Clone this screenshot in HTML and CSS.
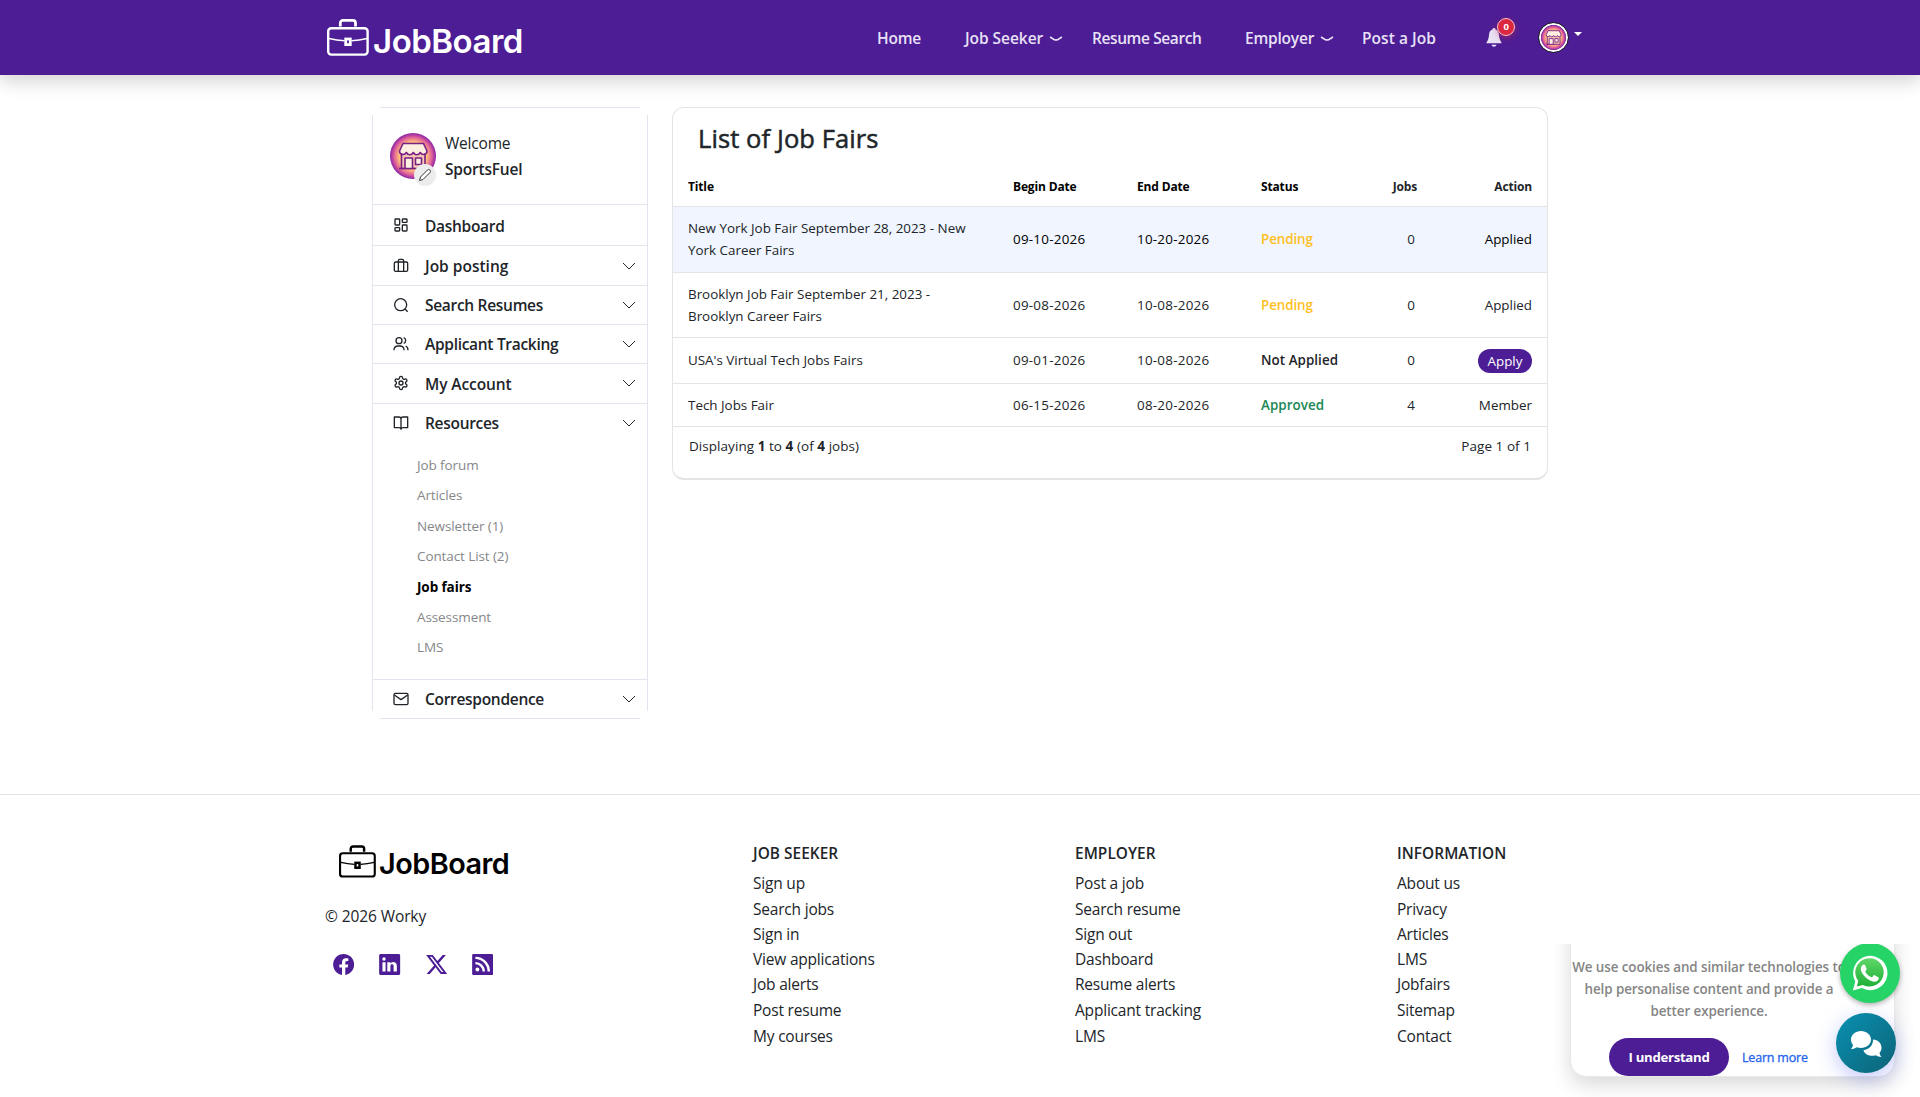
FILE: index.html
```html
<!DOCTYPE html>
<html lang="en">
<head>
  <meta charset="UTF-8">
  <meta name="viewport" content="width=device-width, initial-scale=1.0">
  <title>List of Job Fairs | JobBoard</title>
  <link rel="stylesheet" href="styles.css">
</head>
<body>

  <!-- Shared icons -->
  <svg class="sprite" width="0" height="0">
    <defs>
      <radialGradient id="shop-bg">
        <stop offset="0.6" stop-color="#ffc07a"/>
        <stop offset="0.82" stop-color="#e0609a"/>
        <stop offset="1" stop-color="#8a22a5"/>
      </radialGradient>
      <linearGradient id="wa-bg" x1="0" y1="0" x2="0" y2="1">
        <stop offset="0" stop-color="#5fd669"/>
        <stop offset="1" stop-color="#20b038"/>
      </linearGradient>
      <symbol id="briefcase" viewBox="0 0 42 37">
        <g fill="none" stroke="currentColor" stroke-width="2.4">
          <rect x="1.2" y="9.2" width="39.4" height="26.4" rx="3"/>
          <path d="M13.3 7.5V4a2.6 2.6 0 0 1 2.6-2.6h10A2.6 2.6 0 0 1 28.5 4v3.500" stroke-width="2.800"/>
          <path d="M2 19.500c5 1.200 10 2 15.500 2.300M40 19.500c-5 1.200-10 2-15.500 2.300" stroke-width="1.600"/>
          <rect x="18.700" y="20" width="4.600" height="5.600" stroke-width="2.800"/>
        </g>
      </symbol>
      <symbol id="shop" viewBox="0 0 46 46">
        <circle cx="23" cy="23" r="23" fill="url(#shop-bg)"/>
        <g fill="#fdf0e0" stroke="#7a1f86" stroke-width="1.600" stroke-linejoin="round">
          <path d="M11.500 20v15.500h23.500V20z" fill="#f5c9b0"/>
          <path d="M13 10.500h20.500l3.500 7.500c0 4-5 4.500-6.800 1.500-1.700 3-5.200 3-6.900 0-1.700 3-5.200 3-6.900 0C14.600 22.500 9.500 22 9.500 18z"/>
          <path d="M15 35.500V25h7.500v10.500M25.500 25h6v6.500h-6zM9 35.500h16"/>
        </g>
      </symbol>
      <symbol id="chevron" viewBox="0 0 16 16">
        <path d="M2 5l6 6 6-6" fill="none" stroke="currentColor" stroke-width="1"/>
      </symbol>
    </defs>
  </svg>

  <!-- Navbar -->
  <header class="navbar">
    <div class="navbar-inner">
      <a class="logo" href="#"><svg class="logo-icon"><use href="#briefcase"/></svg><span>JobBoard</span></a>
      <nav class="nav-links">
        <a class="nav-home" href="#">Home</a>
        <a class="nav-seeker" href="#">Job Seeker <svg class="caret" viewBox="0 0 14 6"><path d="M1 1l4 2.500q2 1 4 0L13 1"/></svg></a>
        <a class="nav-resume" href="#">Resume Search</a>
        <a class="nav-employer" href="#">Employer <svg class="caret" viewBox="0 0 14 6"><path d="M1 1l4 2.500q2 1 4 0L13 1"/></svg></a>
        <a class="nav-post" href="#">Post a Job</a>
      </nav>
      <a class="bell" href="#">
        <svg width="16" height="19" viewBox="0 0 16 19"><path d="M8 0c1 0 1.500.7 1.500 1.600C12 2.300 12.800 4.500 13 7c.2 3.500 1.200 5.500 2.500 7.500v.8H.5v-.8C1.800 12.500 2.800 10.500 3 7c.2-2.500 1-4.700 3.500-5.400C6.500.7 7 0 8 0zM5.500 16.800h5c-.3 1.300-1.200 2-2.500 2s-2.200-.7-2.500-2z" fill="#e9e1f5"/></svg>
        <span class="badge">0</span>
      </a>
      <a class="user-menu" href="#"><svg class="user-avatar"><use href="#shop"/></svg><span class="triangle"></span></a>
    </div>
  </header>

  <!-- Main content -->
  <main class="content">
    <aside class="sidebar">
      <div class="profile">
        <div class="profile-picture">
          <svg width="46" height="48"><use href="#shop"/></svg>
          <span class="edit"><svg width="14" height="14" viewBox="0 0 14 14"><path d="M1.500 12.500l1-3.500 7-7c1.500-1.500 4 .8 2.600 2.400L5 11.500z" fill="#fff" stroke="#333" stroke-width="1"/></svg></span>
        </div>
        <div class="profile-name">Welcome<strong>SportsFuel</strong></div>
      </div>
      <a class="menu-item menu-dashboard" href="#">
        <svg class="menu-icon" viewBox="0 0 24 24"><rect x="3" y="3" width="7" height="9" rx="1"/><rect x="14" y="3" width="7" height="5" rx="1"/><rect x="14" y="12" width="7" height="9" rx="1"/><rect x="3" y="16" width="7" height="5" rx="1"/></svg>
        <span>Dashboard</span>
      </a>
      <a class="menu-item menu-posting" href="#">
        <svg class="menu-icon" viewBox="0 0 24 24"><rect x="2" y="6" width="20" height="14" rx="2"/><path d="M16 20V4a2 2 0 0 0-2-2h-4a2 2 0 0 0-2 2v16"/></svg>
        <span>Job posting</span><svg class="arrow"><use href="#chevron"/></svg>
      </a>
      <a class="menu-item" href="#">
        <svg class="menu-icon" viewBox="0 0 24 24"><circle cx="11.500" cy="11.500" r="9"/><path d="M22 22l-4-4"/></svg>
        <span>Search Resumes</span><svg class="arrow"><use href="#chevron"/></svg>
      </a>
      <a class="menu-item" href="#">
        <svg class="menu-icon" viewBox="0 0 24 24"><path d="M1.500 21.500v-1.500a6 6 0 0 1 6-5h3a6 6 0 0 1 6 5v1.500M22.500 21.500c0-3.500-1-5.500-3.500-6.500M16 2.500c4 1 4 7.500 0 8.500"/><circle cx="9" cy="7" r="4.500"/></svg>
        <span>Applicant Tracking</span><svg class="arrow"><use href="#chevron"/></svg>
      </a>
      <a class="menu-item menu-account" href="#">
        <svg class="menu-icon" viewBox="0 0 24 24"><path d="M12.200 2h-.4a2 2 0 0 0-2 2v.2a2 2 0 0 1-1 1.700l-.4.300a2 2 0 0 1-2 0l-.2-.1a2 2 0 0 0-2.700.7l-.2.400a2 2 0 0 0 .7 2.700l.2.100a2 2 0 0 1 1 1.700v.5a2 2 0 0 1-1 1.800l-.2.100a2 2 0 0 0-.7 2.700l.2.400a2 2 0 0 0 2.700.7l.2-.1a2 2 0 0 1 2 0l.4.300a2 2 0 0 1 1 1.700v.2a2 2 0 0 0 2 2h.4a2 2 0 0 0 2-2v-.2a2 2 0 0 1 1-1.700l.4-.3a2 2 0 0 1 2 0l.2.100a2 2 0 0 0 2.700-.7l.2-.4a2 2 0 0 0-.7-2.700l-.2-.1a2 2 0 0 1-1-1.800v-.5a2 2 0 0 1 1-1.700l.2-.1a2 2 0 0 0 .7-2.700l-.2-.4a2 2 0 0 0-2.700-.7l-.2.100a2 2 0 0 1-2 0l-.4-.3a2 2 0 0 1-1-1.700V4a2 2 0 0 0-2-2z"/><circle cx="12" cy="12" r="3"/></svg>
        <span>My Account</span><svg class="arrow"><use href="#chevron"/></svg>
      </a>
      <a class="menu-item" href="#">
        <svg class="menu-icon" viewBox="0 0 24 24"><path d="M12 6v16M2 3h7a3 3 0 0 1 3 3 3 3 0 0 1 3-3h7v16h-7a3 3 0 0 0-3 2 3 3 0 0 0-3-2H2z"/></svg>
        <span>Resources</span><svg class="arrow"><use href="#chevron"/></svg>
      </a>
      <ul class="submenu">
        <li>Job forum</li>
        <li>Articles</li>
        <li>Newsletter (1)</li>
        <li>Contact List (2)</li>
        <li class="active">Job fairs</li>
        <li>Assessment</li>
        <li>LMS</li>
      </ul>
      <a class="menu-item" href="#">
        <svg class="menu-icon" viewBox="0 0 24 24"><rect x="1.500" y="3.500" width="21" height="17" rx="2"/><path d="M2 6l10 7 10-7"/></svg>
        <span>Correspondence</span><svg class="arrow"><use href="#chevron"/></svg>
      </a>
    </aside>

    <section class="card">
      <h1>List of Job Fairs</h1>
      <table>
        <colgroup><col class="col-title"><col class="col-begin"><col class="col-end"><col class="col-status"><col class="col-jobs"><col></colgroup>
        <tr class="head"><th>Title</th><th>Begin Date</th><th>End Date</th><th>Status</th><th class="right th-jobs">Jobs</th><th class="right">Action</th></tr>
        <tr class="tall highlight"><td>New York Job Fair September 28, 2023 - New<br>York Career Fairs</td><td class="date">09-10-2026</td><td class="date">10-20-2026</td><td class="pending">Pending</td><td class="jobs">0</td><td class="right">Applied</td></tr>
        <tr class="tall second"><td>Brooklyn Job Fair September 21, 2023 -<br>Brooklyn Career Fairs</td><td class="date">09-08-2026</td><td class="date">10-08-2026</td><td class="pending">Pending</td><td class="jobs">0</td><td class="right">Applied</td></tr>
        <tr class="third"><td>USA's Virtual Tech Jobs Fairs</td><td class="date">09-01-2026</td><td class="date">10-08-2026</td><td class="not-applied">Not Applied</td><td class="jobs">0</td><td class="right"><a class="apply" href="#">Apply</a></td></tr>
        <tr class="fourth"><td>Tech Jobs Fair</td><td class="date">06-15-2026</td><td class="date">08-20-2026</td><td class="approved">Approved</td><td class="jobs">4</td><td class="right">Member</td></tr>
      </table>
      <div class="pager"><span>Displaying <b>1</b> to <b>4</b> (of <b>4</b> jobs)</span><span>Page 1 of 1</span></div>
    </section>
  </main>

  <!-- Footer -->
  <footer>
    <div class="footer-inner">
      <div class="brand">
        <a class="logo logo-dark" href="#"><svg class="logo-icon"><use href="#briefcase"/></svg><span>JobBoard</span></a>
        <p>© 2026 Worky</p>
        <div class="social">
          <svg viewBox="0 0 16 16"><path d="M16 8.050C16 3.600 12.420 0 8 0S0 3.600 0 8.050c0 4.020 2.930 7.350 6.750 7.950v-5.630H4.720V8.050h2.030V6.280c0-2.020 1.200-3.130 3.020-3.130.88 0 1.790.16 1.790.16v1.980h-1c-1 0-1.310.62-1.310 1.260v1.500h2.220l-.35 2.320H9.250V16C13.070 15.400 16 12.070 16 8.050z"/></svg>
          <svg viewBox="0 0 16 16"><path fill-rule="evenodd" d="M0 1.150C0 .5.500 0 1.200 0h13.600c.7 0 1.200.5 1.200 1.150v13.700c0 .65-.5 1.150-1.200 1.150H1.200C.5 16 0 15.500 0 14.850zM2.500 6.200v7.200h2.400V6.200zM3.700 2.500a1.300 1.300 0 1 0 0 2.600 1.300 1.300 0 0 0 0-2.600zM6.200 6.200v7.200h2.400v-4c0-1 .4-1.500 1.200-1.500.9 0 1.200.6 1.200 1.600v3.900h2.500V9.200c0-2.200-1.200-3.200-2.800-3.200-1.100 0-1.700.6-2.100 1.200v-1z"/></svg>
          <svg viewBox="0 0 16 16"><path fill-rule="evenodd" d="M12.600.75h2.450L9.700 6.880 16 15.250h-4.940l-3.860-5.070-4.430 5.070H.32l5.730-6.570L0 .75h5.060l3.500 4.640zm-.86 13.030h1.360L4.320 2.150H2.860z"/></svg>
          <svg viewBox="0 0 16 16"><path fill-rule="evenodd" d="M1 0h14a1 1 0 0 1 1 1v14a1 1 0 0 1-1 1H1a1 1 0 0 1-1-1V1a1 1 0 0 1 1-1zm1.500 2v1.900A9.400 9.400 0 0 1 11.700 13.300h1.900A11.200 11.200 0 0 0 2.500 2zm0 4v1.900A5.400 5.400 0 0 1 7.900 13.300h1.900A7.300 7.300 0 0 0 2.500 6zM4 10.300a1.500 1.500 0 1 0 0 3 1.500 1.500 0 0 0 0-3z"/></svg>
        </div>
      </div>
      <div class="links">
        <h2>JOB SEEKER</h2>
        <ul><li>Sign up</li><li>Search jobs</li><li class="clipped">Sign in</li><li>View applications</li><li>Job alerts</li><li>Post resume</li><li>My courses</li></ul>
      </div>
      <div class="links">
        <h2>EMPLOYER</h2>
        <ul><li>Post a job</li><li>Search resume</li><li class="clipped">Sign out</li><li>Dashboard</li><li>Resume alerts</li><li>Applicant tracking</li><li>LMS</li></ul>
      </div>
      <div class="links">
        <h2>INFORMATION</h2>
        <ul><li>About us</li><li>Privacy</li><li class="clipped">Articles</li><li>LMS</li><li>Jobfairs</li><li>Sitemap</li><li>Contact</li></ul>
      </div>
    </div>
  </footer>

  <!-- Floating widgets -->
  <div class="widgets">
    <div class="cookie">
      <p>We use cookies and similar technologies to<br>help personalise content and provide a<br>better experience.</p>
      <div class="cookie-actions"><button>I understand</button><a href="#">Learn more</a></div>
    </div>
    <a class="whatsapp" href="#">
      <svg width="36" height="36" viewBox="0 0 36 36"><path d="M.8 35.500l2.500-9A17.200 17.200 0 1 1 9.800 33z" fill="#fff"/><path d="M4.800 31.500l1.500-5.400A14.200 14.200 0 1 1 11 30z" fill="url(#wa-bg)"/><path d="M12.600 9.800c-.8-.4-1.700-.2-2.300.5-3 3.300-1 7.600 2.700 11.500 4.300 4.500 9.500 6.400 12.700 3.600 1-1 1.300-2.600 1-3l-4-2.200c-.8-.3-1 .1-2.200 1.800-.4.500-.9.300-1.900-.2-2.200-1-4-2.800-5.200-4.900-.3-.6.2-.8 1.200-2.300.3-.5 0-1-1-3.200-.4-1-.6-1.400-1-1.600z" fill="#fff"/></svg>
    </a>
    <a class="chat" href="#">
      <svg width="31" height="26" viewBox="0 0 31 26"><path d="M10 0c5.600 0 10 3.700 10 8.500S15.600 17 10 17c-1.600 0-3-.3-4.300-.8C4.400 17.200 2.300 18 0 18c1-1.200 1.800-2.500 2-4C.8 12.500 0 10.500 0 8.500 0 3.700 4.400 0 10 0z" fill="#fff"/><path d="M22 8.500c5 .3 8.500 3.700 8.500 8.200 0 2-.7 3.800-2 5.200.3 1.500 1 2.900 2 4-2.200 0-4.200-.8-5.600-1.700-1.300.4-2.600.6-3.900.6-4.300 0-7.500-2.200-8.600-5.500 5.700-.8 9.900-5.200 9.600-10.800z" fill="#fff"/></svg>
    </a>
  </div>

</body>
</html>
```
FILE: styles.css
```css
/* General Styles */
* {
  box-sizing: border-box;
}

body {
  font-family: 'Open Sans', 'Noto Sans', sans-serif;
  margin: 0;
  height: 1097px;
  overflow: hidden;
  position: relative;
  color: #212529;
  font-size: 15.5px;
  letter-spacing: -0.2px;
  background: #fff;
}

a {
  color: inherit;
  text-decoration: none;
}

ul {
  list-style: none;
  margin: 0;
  padding: 0;
}

.sprite {
  position: absolute;
}

/* Navbar Styles */
.navbar {
  height: 75px;
  background: #4c1d95;
  box-shadow: 0 8px 16px rgba(0, 0, 0, 0.15);
}

.navbar-inner {
  width: 1270px;
  height: 75px;
  margin: 0 auto;
  display: flex;
  align-items: center;
}

.logo {
  display: flex;
  align-items: flex-start;
  width: 205px;
  height: 37px;
  margin-left: 2px;
  color: #fff;
  font-family: 'Inter', sans-serif;
  font-weight: 600;
  font-size: 33px;
  line-height: 44px;
  letter-spacing: -0.5px;
}

.logo-icon {
  width: 42px;
  height: 37px;
  margin-right: 4px;
  flex-shrink: 0;
}

.nav-links {
  display: flex;
  margin-left: 345px;
  color: #e9e1f5;
  font-weight: 600;
  white-space: nowrap;
}

.nav-home { width: 88px; }
.nav-seeker { width: 127px; letter-spacing: -0.05px; }
.nav-resume { width: 153px; letter-spacing: -0.4px; }
.nav-employer { width: 117px; }
.nav-post { width: 124px; letter-spacing: 0.05px; }

.caret {
  width: 14px;
  height: 6px;
  margin-left: 2px;
  vertical-align: 2px;
  fill: none;
  stroke: #e9e1f5;
  stroke-width: 1.5;
}

.bell {
  position: relative;
  width: 53px;
  height: 19px;
}

.bell svg {
  display: block;
}

.badge {
  position: absolute;
  left: 11px;
  top: -10px;
  width: 18px;
  height: 18px;
  border: 1px solid #f3c3cd;
  border-radius: 50%;
  background: #dc2740;
  box-shadow: 0 2px 6px rgba(220, 39, 64, 0.5);
  color: #fff;
  font-size: 9.5px;
  font-weight: 700;
  line-height: 16px;
  text-align: center;
}

.user-menu {
  display: flex;
  align-items: center;
}

.user-avatar {
  width: 29px;
  height: 29px;
  border: 2px solid #fff;
  border-radius: 50%;
  outline: 1px solid #222;
}

.triangle {
  margin: -7px 0 0 6px;
  border: 4px solid transparent;
  border-top-color: #fff;
  border-bottom: 0;
}

/* Main Layout */
.content {
  display: flex;
  align-items: flex-start;
  gap: 24px;
  width: 1176px;
  height: 719px;
  margin: 0 auto;
  padding-top: 32px;
}

/* Sidebar Styles */
/* outline is open at the four corners */
.sidebar {
  width: 276px;
  height: 612px;
  padding: 1px;
  background:
    linear-gradient(#e4e4ee, #e4e4ee) center top / 260px 1px no-repeat,
    linear-gradient(#e4e4ee, #e4e4ee) center bottom / 260px 1px no-repeat,
    linear-gradient(#e4e4ee, #e4e4ee) left center / 1px 596px no-repeat,
    linear-gradient(#e4e4ee, #e4e4ee) right center / 1px 596px no-repeat;
}

.profile {
  display: flex;
  height: 96px;
  padding: 24px 0 0 17px;
}

.profile-picture {
  position: relative;
  width: 46px;
  height: 54px;
  margin-right: 9px;
}

.profile-picture > svg {
  display: block;
}

.edit {
  position: absolute;
  right: 0;
  bottom: 0;
  width: 22px;
  height: 22px;
  padding: 4px;
  border-radius: 50%;
  background: #ececec;
}

.edit svg {
  display: block;
}

.profile-name {
  line-height: 26px;
  margin-top: -2px;
}

.profile-name strong {
  display: block;
  font-weight: 600;
}

.menu-item {
  display: flex;
  align-items: center;
  height: 39px;
  padding: 0 10px 0 20px;
  border-top: 1px solid #e4e4ee;
  font-weight: 600;
  letter-spacing: -0.3px;
}

.menu-dashboard {
  height: 41px;
  padding-top: 1px;
}

.menu-posting {
  height: 40px;
  padding-top: 1px;
  letter-spacing: 0;
}

.menu-account {
  height: 40px;
  letter-spacing: -0.1px;
}

.menu-icon {
  width: 16px;
  height: 16px;
  margin-right: 16px;
  margin-top: -1px;
  fill: none;
  stroke: #212529;
  stroke-width: 2;
  stroke-linejoin: round;
}

.arrow {
  width: 16px;
  height: 16px;
  margin-left: auto;
  margin-top: -1px;
}

.submenu {
  height: 237px;
  padding: 7px 0 0 44px;
  color: #85878a;
  font-size: 13.5px;
  letter-spacing: -0.1px;
}

.submenu li {
  height: 30.4px;
  line-height: 32px;
}

.submenu .active {
  color: #000;
  font-weight: 700;
}

/* Job Fairs Card */
.card {
  width: 876px;
  height: 373px;
  border: 1px solid #e3e4e6;
  border-bottom-width: 2px;
  border-radius: 12px;
}

h1 {
  height: 60px;
  margin: 0;
  padding-left: 25px;
  font-size: 25.5px;
  font-weight: 400;
  letter-spacing: 0.1px;
  line-height: 61px;
  -webkit-text-stroke: 0.5px #212529;
}

table {
  width: 874px;
  table-layout: fixed;
  border-collapse: collapse;
  font-size: 13.4px;
  letter-spacing: 0;
  line-height: 22px;
}

.col-title { width: 325px; }
.col-begin { width: 124px; }
.col-end { width: 124px; }
.col-status { width: 115px; }
.col-jobs { width: 73px; }

th,
td {
  padding: 0 15px;
  border-bottom: 1px solid #e3e4e8;
  text-align: left;
  white-space: nowrap;
}

th {
  color: #000;
  font-size: 12px;
  letter-spacing: -0.15px;
}

.head { height: 38px; }
.tall { height: 66px; }
.second { height: 65px; }
.third { height: 46px; }
.fourth { height: 43px; }

.highlight {
  background: #f0f5ff;
}

.highlight .date,
.highlight .right {
  color: #000;
}

.date {
  letter-spacing: 0.25px;
}

.right {
  text-align: right;
}

th.right {
  padding-left: 0;
  color: #212529;
}

th.th-jobs {
  padding-right: 17px;
}

.jobs {
  padding-right: 19px;
  text-align: right;
}

.pending {
  color: #ffc01e;
  font-weight: 600;
}

.not-applied {
  font-weight: 600;
}

.approved {
  color: #198754;
  font-weight: 600;
}

.approved,
.not-applied {
  letter-spacing: 0.05px;
}

.pending {
  letter-spacing: -0.1px;
}

.apply {
  display: inline-block;
  width: 54px;
  height: 24px;
  margin-top: 2px;
  border-radius: 12px;
  background: #4c1d95;
  color: #fff;
  line-height: 24px;
  text-align: center;
}

.pager {
  display: flex;
  justify-content: space-between;
  padding: 9px 16px;
  font-size: 13.5px;
  letter-spacing: 0.05px;
  line-height: 20px;
}

/* Footer Styles */
footer {
  height: 303px;
  border-top: 1px solid #e3e4e6;
}

.footer-inner {
  display: grid;
  grid-template-columns: 428px 322px 322px 198px;
  width: 1270px;
  margin: 0 auto;
  padding-top: 48px;
}

.logo-dark {
  width: 176px;
  height: 33px;
  margin: 2px 0 0 14px;
  color: #000;
  font-size: 28.8px;
  line-height: 38px;
  letter-spacing: -0.5px;
}

.logo-dark .logo-icon {
  width: 37px;
  height: 33px;
  margin-right: 3px;
}

.brand p {
  margin: 26px 0 26px;
  line-height: 24px;
  letter-spacing: -0.1px;
}

.social {
  display: flex;
  gap: 25px;
  padding-left: 8px;
}

.social svg {
  width: 21.3px;
  height: 21px;
  fill: #4c1d95;
}

h2 {
  height: 27px;
  margin: 0;
  font-size: 15.4px;
  font-weight: 600;
  letter-spacing: 0.05px;
  line-height: 22px;
}

.links li {
  height: 25.7px;
  line-height: 26px;
}

.links .clipped {
  height: 24.4px;
  overflow: hidden;
}

/* Floating widgets */
.widgets {
  position: absolute;
  right: 0;
  bottom: 0;
  width: 370px;
  height: 153px;
  overflow: hidden;
}

.cookie {
  position: absolute;
  left: 20px;
  top: -60px;
  width: 325px;
  height: 193px;
  padding-top: 71px;
  border: 1px solid #e8e8e8;
  border-radius: 16px;
  background: #fff;
  box-shadow: 0 8px 20px rgba(0, 0, 0, 0.15);
  text-align: center;
}

.cookie p {
  width: 276px;
  margin: 0;
  color: #858585;
  font-size: 13.4px;
  font-weight: 600;
  letter-spacing: -0.08px;
  line-height: 22px;
  white-space: nowrap;
}

.cookie-actions {
  display: flex;
  align-items: center;
  gap: 13px;
  padding: 16px 0 0 38px;
}

.cookie button {
  width: 120px;
  height: 38px;
  padding: 0;
  border: 0;
  border-radius: 19px;
  background: #4c1d95;
  color: #fff;
  font: inherit;
  font-size: 13.2px;
  font-weight: 700;
  letter-spacing: -0.3px;
}

.cookie-actions a {
  color: #2563eb;
  font-size: 12.5px;
  -webkit-text-stroke: 0.3px #2563eb;
}

.whatsapp {
  position: absolute;
  left: 290px;
  top: -1px;
  width: 60px;
  height: 60px;
  padding: 12px;
  border-radius: 50%;
  background: #25d366;
  box-shadow: 0 2px 5px rgba(0, 0, 0, 0.3);
}

.chat {
  position: absolute;
  left: 286px;
  top: 69px;
  width: 60px;
  height: 60px;
  padding: 18px 15px;
  border-radius: 50%;
  background: linear-gradient(135deg, #0891b2, #0e6377);
  box-shadow: 0 6px 20px rgba(79, 100, 240, 0.35);
}
```
